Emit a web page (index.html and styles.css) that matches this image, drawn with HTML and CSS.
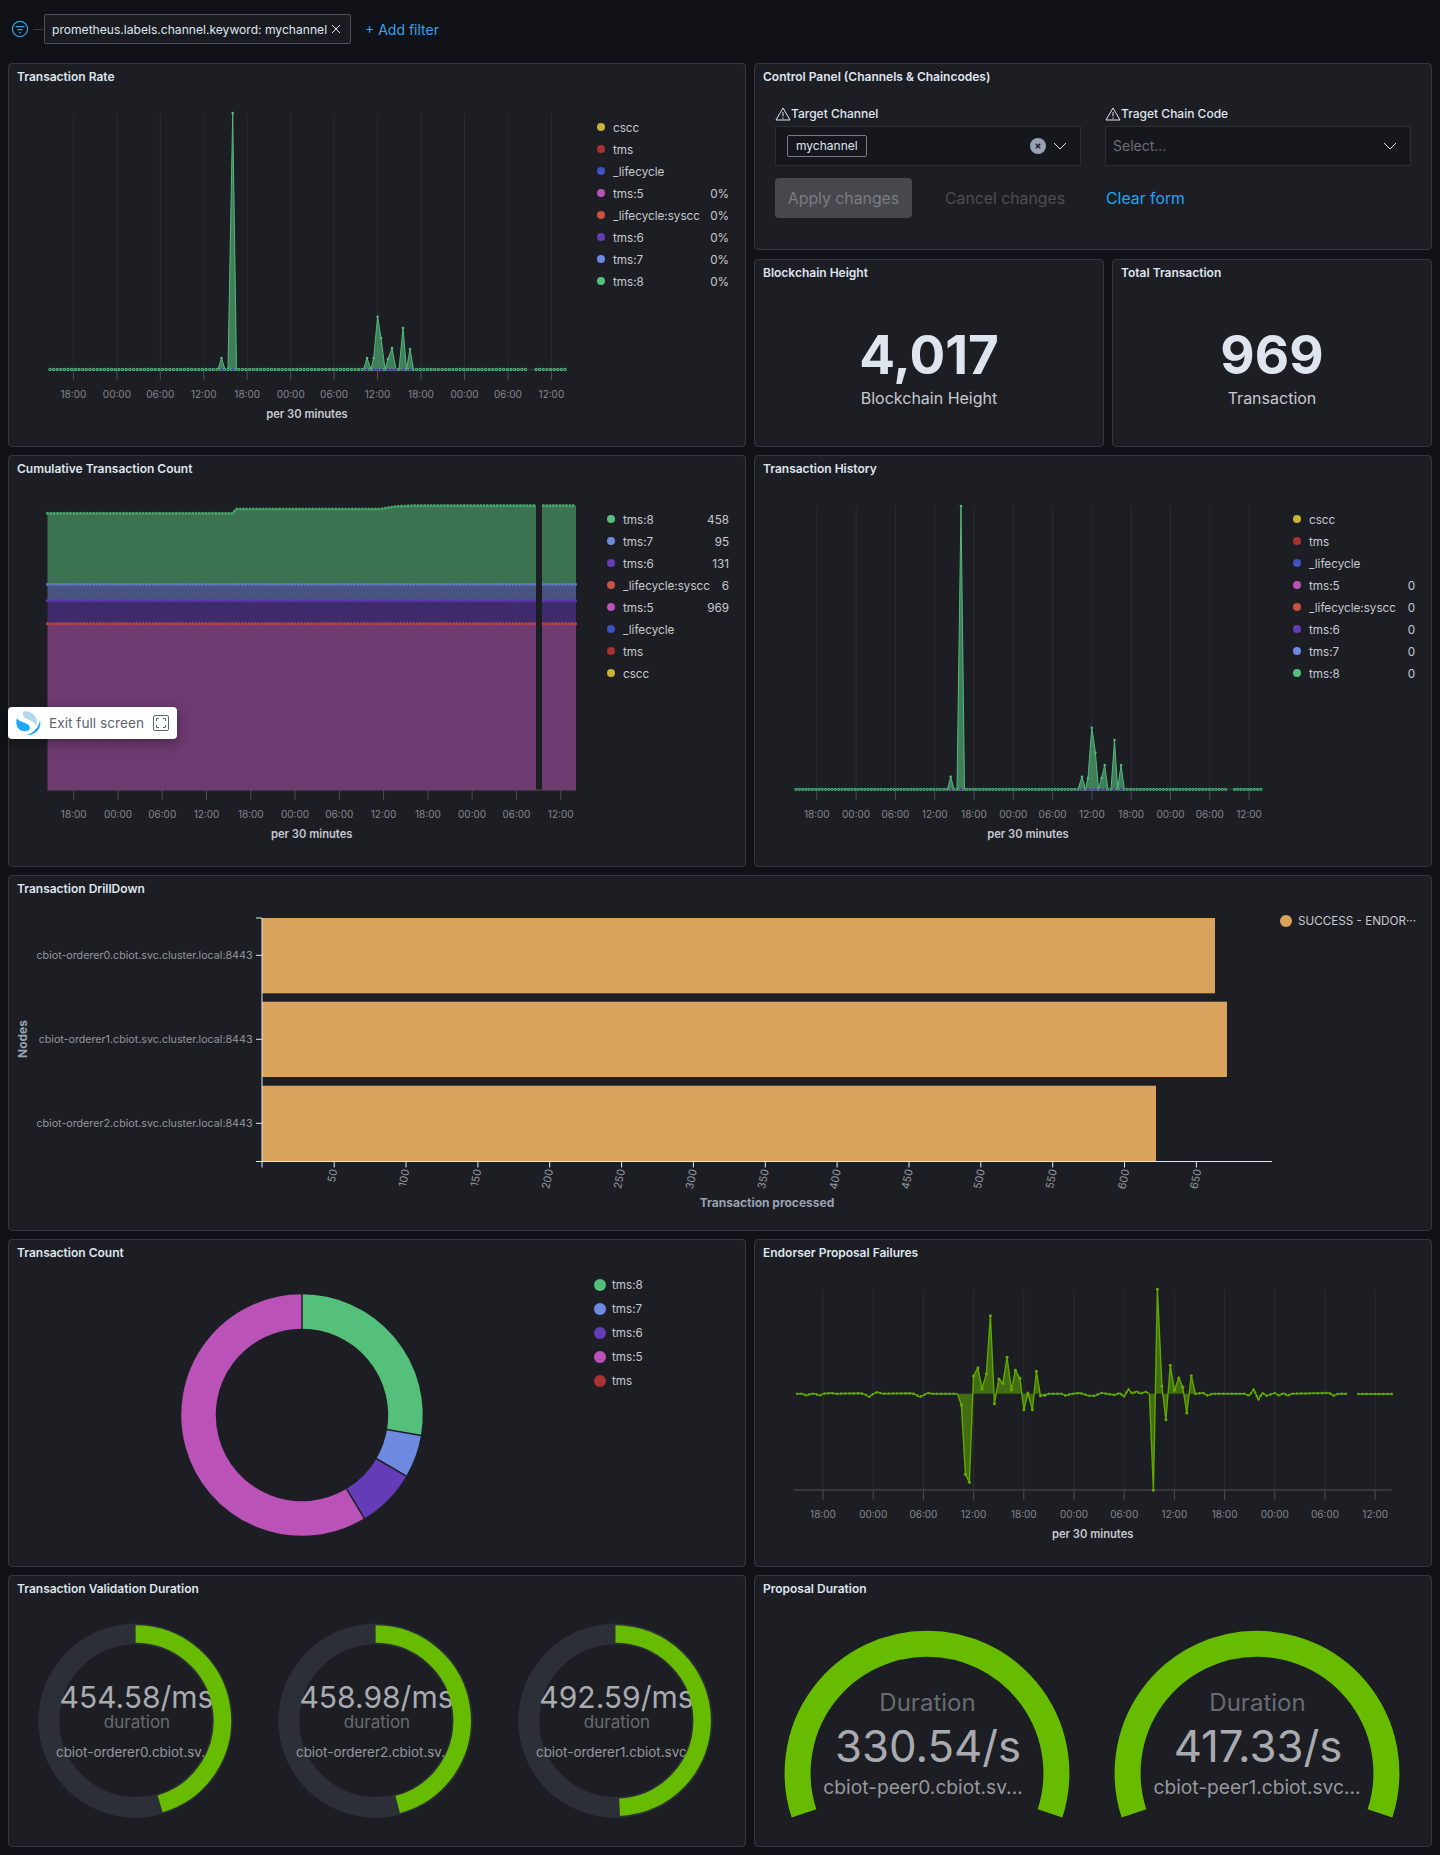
FILE: index.html
```html
<!DOCTYPE html>
<html lang="en">
<head>
<meta charset="utf-8">
<title>Dashboard</title>
<link rel="stylesheet" href="styles.css">
</head>
<body>
<header class="filter-bar">
  <svg class="filter-icon" width="18" height="18" viewBox="0 0 18 18"><circle cx="9" cy="9" r="7.6"/><path d="M4.6 6.6h8.8M6.4 9.6h5.2M8.2 12.6h1.600"/></svg>
  <span class="filter-dash"></span>
  <div class="filter-pill"><span>prometheus.labels.channel.keyword: mychannel</span><svg width="10" height="10" viewBox="0 0 10 10"><path d="M1 1l8 8M9 1l-8 8"/></svg></div>
  <a class="add-filter">+ Add filter</a>
</header>

<main class="dashboard">
  <section class="row row-1">
    <article class="panel">
      <h2>Transaction Rate</h2>
      <div class="chart-body">
        <svg width="585" height="355" viewBox="9 91 585 355">
          <defs>
            <marker id="mg" markerUnits="userSpaceOnUse" markerWidth="5" markerHeight="5" refX="2.5" refY="2.5" viewBox="0 0 5 5"><circle cx="2.5" cy="2.5" r="1.3" fill="#54b97b"/></marker>
            <marker id="ml" markerUnits="userSpaceOnUse" markerWidth="5" markerHeight="5" refX="2.5" refY="2.5" viewBox="0 0 5 5"><circle cx="2.5" cy="2.5" r="1.5" fill="#69ad00"/></marker>
          </defs>
          <path class="grid" d="M73.4 113V370M116.9 113V370M160.3 113V370M203.8 113V370M247.2 113V370M290.7 113V370M334.1 113V370M377.6 113V370M421 113V370M464.5 113V370M507.9 113V370M551.4 113V370"/>
          <path class="tick" d="M73.4 370V380M116.9 370V380M160.3 370V380M203.8 370V380M247.2 370V380M290.7 370V380M334.1 370V380M377.6 370V380M421 370V380M464.5 370V380M507.9 370V380M551.4 370V380"/>
          <polygon class="area-g" points="218,369.5 221.5,358 225,369.5"/>
          <polygon class="area-g" points="228,369.5 232.7,113 236.5,369.5"/>
          <polygon class="area-g" points="363.5,369.5 367,358 371,369.5 373.7,358 377.6,316.7 381,338 385,369.5 388,359 392,348 396,369.5"/>
          <polygon class="area-g" points="399,369.5 403,328 406.5,369.5 410,349 413.5,369.5"/>
          <polyline class="line-g" marker-mid="url(#mg)" points="218,369.5 221.5,358 225,369.5"/>
          <polyline class="line-g" marker-mid="url(#mg)" points="228,369.5 232.7,113 236.5,369.5"/>
          <polyline class="line-g" marker-mid="url(#mg)" points="363.5,369.5 367,358 371,369.5 373.7,358 377.6,316.7 381,338 385,369.5 388,359 392,348 396,369.5"/>
          <polyline class="line-g" marker-mid="url(#mg)" points="399,369.5 403,328 406.5,369.5 410,349 413.5,369.5"/>
          <path class="base-line" d="M50 369.5H567"/>
          <path class="dots-g" d="M50 369.5H528M536 369.5H567"/>
          <path class="dots-p" d="M222 369.5h1M233 369.5h1M367 369.5h1M374 369.5h8M388 369.5h8M403 369.5h1M410 369.5h1"/>
          <path class="dots-c" d="M50 369.5H528M536 369.5H567"/>
          <g class="tick-labels">
            <text x="73.4" y="397.6">18:00</text><text x="116.9" y="397.6">00:00</text><text x="160.3" y="397.6">06:00</text><text x="203.8" y="397.6">12:00</text><text x="247.2" y="397.6">18:00</text><text x="290.7" y="397.6">00:00</text><text x="334.1" y="397.6">06:00</text><text x="377.6" y="397.6">12:00</text><text x="421" y="397.6">18:00</text><text x="464.5" y="397.6">00:00</text><text x="507.9" y="397.6">06:00</text><text x="551.4" y="397.6">12:00</text>
          </g>
          <text class="axis-title" x="307" y="418">per 30 minutes</text>
        </svg>
        <ul class="legend legend-a">
          <li><i class="c-cscc"></i><span>cscc</span></li>
          <li><i class="c-tms"></i><span>tms</span></li>
          <li><i class="c-life"></i><span>_lifecycle</span></li>
          <li><i class="c-t5"></i><span>tms:5</span><b>0%</b></li>
          <li><i class="c-sys"></i><span>_lifecycle:syscc</span><b>0%</b></li>
          <li><i class="c-t6"></i><span>tms:6</span><b>0%</b></li>
          <li><i class="c-t7"></i><span>tms:7</span><b>0%</b></li>
          <li><i class="c-t8"></i><span>tms:8</span><b>0%</b></li>
        </ul>
      </div>
    </article>

    <div class="side">
      <article class="panel panel-control">
        <h2>Control Panel (Channels &amp; Chaincodes)</h2>
        <div class="control-body">
          <div class="fields">
            <div class="field">
              <label><svg width="16" height="14" viewBox="0 0 16 14"><path d="M8 1L1 13h14zM8 5v4.4M8 10.6v1.2"/></svg>Target Channel</label>
              <div class="select">
                <span class="chip">mychannel</span>
                <svg class="clear" width="16" height="16" viewBox="0 0 16 16"><circle cx="8" cy="8" r="8"/><path d="M5.8 5.8l4.4 4.4M10.2 5.8l-4.4 4.4"/></svg>
                <svg class="chev" width="14" height="8" viewBox="0 0 14 8"><path d="M1 1l6 6 6-6"/></svg>
              </div>
            </div>
            <div class="field">
              <label><svg width="16" height="14" viewBox="0 0 16 14"><path d="M8 1L1 13h14zM8 5v4.4M8 10.6v1.2"/></svg>Traget Chain Code</label>
              <div class="select">
                <span class="placeholder">Select...</span>
                <svg class="chev" width="14" height="8" viewBox="0 0 14 8"><path d="M1 1l6 6 6-6"/></svg>
              </div>
            </div>
          </div>
          <div class="actions">
            <button class="btn-apply">Apply changes</button>
            <span class="btn-cancel">Cancel changes</span>
            <a class="btn-clear">Clear form</a>
          </div>
        </div>
      </article>
      <div class="stats">
        <article class="panel panel-stat">
          <h2>Blockchain Height</h2>
          <div class="stat-body"><strong>4,017</strong><span>Blockchain Height</span></div>
        </article>
        <article class="panel panel-stat">
          <h2>Total Transaction</h2>
          <div class="stat-body"><strong>969</strong><span>Transaction</span></div>
        </article>
      </div>
    </div>
  </section>

  <section class="row row-2">
    <article class="panel">
      <h2>Cumulative Transaction Count</h2>
      <div class="chart-body">
        <svg width="597" height="383" viewBox="9 483 597 383">
          <rect class="fill-m" x="47.5" y="623.7" width="528.5" height="166.3"/>
          <rect class="fill-pu" x="47.5" y="600.7" width="528.5" height="23"/>
          <rect class="fill-b" x="47.5" y="584.3" width="528.5" height="16.4"/>
          <polygon class="fill-gr" points="47.5,584.3 47.5,513.3 232.7,513.3 236,509 380.5,509 395,506.5 412,505.7 576,505.7 576,584.3"/>
          <path class="grid-soft" d="M73.7 505V790M118 505V790M162.2 505V790M206.5 505V790M250.8 505V790M295 505V790M339.3 505V790M383.6 505V790M427.9 505V790M472.1 505V790M516.4 505V790M560.7 505V790"/>
          <polyline class="stack-line gr" points="47.5,513.3 232.7,513.3 236,509 380.5,509 395,506.5 412,505.7 576,505.7"/>
          <path class="stack-line bl" d="M47.5 584.3H576"/>
          <path class="stack-line pu" d="M47.5 600.7H576"/>
          <path class="stack-line re" d="M47.5 623.7H576"/>
          <rect class="gap" x="536" y="500" width="6" height="290"/>
          <path class="axis-line" d="M47.5 790H576"/>
          <path class="tick" d="M73.7 790V800M118 790V800M162.2 790V800M206.5 790V800M250.8 790V800M295 790V800M339.3 790V800M383.6 790V800M427.9 790V800M472.1 790V800M516.4 790V800M560.7 790V800"/>
          <g class="tick-labels">
            <text x="73.7" y="817.6">18:00</text><text x="118" y="817.6">00:00</text><text x="162.2" y="817.6">06:00</text><text x="206.5" y="817.6">12:00</text><text x="250.8" y="817.6">18:00</text><text x="295" y="817.6">00:00</text><text x="339.3" y="817.6">06:00</text><text x="383.6" y="817.6">12:00</text><text x="427.9" y="817.6">18:00</text><text x="472.1" y="817.6">00:00</text><text x="516.4" y="817.6">06:00</text><text x="560.7" y="817.6">12:00</text>
          </g>
          <text class="axis-title" x="311.7" y="837.7">per 30 minutes</text>
        </svg>
        <ul class="legend legend-b">
          <li><i class="c-t8"></i><span>tms:8</span><b>458</b></li>
          <li><i class="c-t7"></i><span>tms:7</span><b>95</b></li>
          <li><i class="c-t6"></i><span>tms:6</span><b>131</b></li>
          <li><i class="c-sys"></i><span>_lifecycle:syscc</span><b>6</b></li>
          <li><i class="c-t5"></i><span>tms:5</span><b>969</b></li>
          <li><i class="c-life"></i><span>_lifecycle</span></li>
          <li><i class="c-tms"></i><span>tms</span></li>
          <li><i class="c-cscc"></i><span>cscc</span></li>
        </ul>
      </div>
    </article>

    <article class="panel">
      <h2>Transaction History</h2>
      <div class="chart-body">
        <svg width="537" height="383" viewBox="755 483 537 383">
          <path class="grid" d="M816.8 506V790M856.1 506V790M895.4 506V790M934.7 506V790M974 506V790M1013.3 506V790M1052.6 506V790M1091.9 506V790M1131.2 506V790M1170.5 506V790M1209.8 506V790M1249.1 506V790"/>
          <path class="tick" d="M816.8 790V800M856.1 790V800M895.4 790V800M934.7 790V800M974 790V800M1013.3 790V800M1052.6 790V800M1091.9 790V800M1131.2 790V800M1170.5 790V800M1209.8 790V800M1249.1 790V800"/>
          <polygon class="area-g" points="947.5,789.3 950.7,776.7 954,789.3"/>
          <polygon class="area-g" points="957,789.3 961,506 964.5,789.3"/>
          <polygon class="area-g" points="1078,789.3 1082,776.7 1085.5,789.3 1088,778 1091.8,727.7 1095.4,752.7 1098.5,789.3 1101.6,778 1104.7,765 1107.9,789.3"/>
          <polygon class="area-g" points="1111,789.3 1114.5,740 1117.7,789.3 1121,765 1124.4,789.3"/>
          <polyline class="line-g" marker-mid="url(#mg)" points="947.5,789.3 950.7,776.7 954,789.3"/>
          <polyline class="line-g" marker-mid="url(#mg)" points="957,789.3 961,506 964.5,789.3"/>
          <polyline class="line-g" marker-mid="url(#mg)" points="1078,789.3 1082,776.7 1085.5,789.3 1088,778 1091.8,727.7 1095.4,752.7 1098.5,789.3 1101.6,778 1104.7,765 1107.9,789.3"/>
          <polyline class="line-g" marker-mid="url(#mg)" points="1111,789.3 1114.5,740 1117.7,789.3 1121,765 1124.4,789.3"/>
          <path class="base-line" d="M796 789.3H1263"/>
          <path class="dots-g2" d="M796 789.3H1226.6M1234.6 789.3H1263"/>
          <path class="dots-p" d="M951 789.3h1M961 789.3h1M1082 789.3h1M1088 789.3h8M1101 789.3h6M1114 789.3h1M1121 789.3h1"/>
          <path class="dots-c2" d="M796 789.3H1226.6M1234.6 789.3H1263"/>
          <g class="tick-labels">
            <text x="816.8" y="817.6">18:00</text><text x="856.1" y="817.6">00:00</text><text x="895.4" y="817.6">06:00</text><text x="934.7" y="817.6">12:00</text><text x="974" y="817.6">18:00</text><text x="1013.3" y="817.6">00:00</text><text x="1052.6" y="817.6">06:00</text><text x="1091.9" y="817.6">12:00</text><text x="1131.2" y="817.6">18:00</text><text x="1170.5" y="817.6">00:00</text><text x="1209.8" y="817.6">06:00</text><text x="1249.1" y="817.6">12:00</text>
          </g>
          <text class="axis-title" x="1028" y="837.7">per 30 minutes</text>
        </svg>
        <ul class="legend legend-c">
          <li><i class="c-cscc"></i><span>cscc</span></li>
          <li><i class="c-tms"></i><span>tms</span></li>
          <li><i class="c-life"></i><span>_lifecycle</span></li>
          <li><i class="c-t5"></i><span>tms:5</span><b>0</b></li>
          <li><i class="c-sys"></i><span>_lifecycle:syscc</span><b>0</b></li>
          <li><i class="c-t6"></i><span>tms:6</span><b>0</b></li>
          <li><i class="c-t7"></i><span>tms:7</span><b>0</b></li>
          <li><i class="c-t8"></i><span>tms:8</span><b>0</b></li>
        </ul>
      </div>
    </article>
  </section>

  <section class="row row-3">
    <article class="panel">
      <h2>Transaction DrillDown</h2>
      <div class="chart-body">
        <svg width="1271" height="327" viewBox="9 903 1271 327">
          <rect class="bar" x="262" y="918" width="953" height="75.3"/>
          <rect class="bar" x="262" y="1001.7" width="965" height="75.3"/>
          <rect class="bar" x="262" y="1085.7" width="894" height="75.3"/>
          <path class="bar-axis" d="M262 918V1161.5H1272M256 918h6M256 955.3h6M256 1039.3h6M256 1123.3h6M256 1161.5h6M262 1161.5v6M334.2 1161.5v6M406 1161.5v6M477.9 1161.5v6M549.7 1161.5v6M621.6 1161.5v6M693.4 1161.5v6M765.3 1161.5v6M837.1 1161.5v6M909 1161.5v6M980.8 1161.5v6M1052.7 1161.5v6M1124.5 1161.5v6M1196.4 1161.5v6"/>
          <g class="node-labels">
            <text x="252.5" y="959">cbiot-orderer0.cbiot.svc.cluster.local:8443</text>
            <text x="252.5" y="1043">cbiot-orderer1.cbiot.svc.cluster.local:8443</text>
            <text x="252.5" y="1127">cbiot-orderer2.cbiot.svc.cluster.local:8443</text>
          </g>
          <g class="rot-labels">
            <text transform="translate(337.5 1170) rotate(-78)">50</text>
            <text transform="translate(409.5 1170) rotate(-78)">100</text>
            <text transform="translate(481.4 1170) rotate(-78)">150</text>
            <text transform="translate(553.2 1170) rotate(-78)">200</text>
            <text transform="translate(625.1 1170) rotate(-78)">250</text>
            <text transform="translate(697 1170) rotate(-78)">300</text>
            <text transform="translate(769 1170) rotate(-78)">350</text>
            <text transform="translate(841 1170) rotate(-78)">400</text>
            <text transform="translate(913 1170) rotate(-78)">450</text>
            <text transform="translate(985 1170) rotate(-78)">500</text>
            <text transform="translate(1057 1170) rotate(-78)">550</text>
            <text transform="translate(1129.5 1170) rotate(-78)">600</text>
            <text transform="translate(1201.5 1170) rotate(-78)">650</text>
          </g>
          <text class="bar-title" transform="translate(27 1039) rotate(-90)">Nodes</text>
          <text class="bar-title" x="767" y="1207">Transaction processed</text>
        </svg>
        <ul class="legend legend-d">
          <li><i class="c-orange"></i><span>SUCCESS - ENDOR···</span></li>
        </ul>
      </div>
    </article>
  </section>

  <section class="row row-4">
    <article class="panel">
      <h2>Transaction Count</h2>
      <div class="chart-body">
        <svg width="585" height="299" viewBox="9 1267 585 299">
          <g class="donut">
            <path class="s-t8" d="M302 1311.5A103.5 103.5 0 0 1 404 1432.4"/>
            <path class="s-t7" d="M404 1432.4A103.5 103.5 0 0 1 391.3 1467.4"/>
            <path class="s-t6" d="M391.3 1467.4A103.5 103.5 0 0 1 355.5 1503.6"/>
            <path class="s-t5" d="M355.5 1503.6A103.5 103.5 0 1 1 302 1311.5"/>
          </g>
          <path class="donut-sep" d="M302 1293V1329M386.8 1429.5L421.3 1435.4M376.2 1458.5L406.4 1476.2M346.4 1488.6L364.5 1518.6"/>
        </svg>
        <ul class="legend legend-e">
          <li><i class="c-t8"></i><span>tms:8</span></li>
          <li><i class="c-t7"></i><span>tms:7</span></li>
          <li><i class="c-t6"></i><span>tms:6</span></li>
          <li><i class="c-t5"></i><span>tms:5</span></li>
          <li><i class="c-tms"></i><span>tms</span></li>
        </ul>
      </div>
    </article>

    <article class="panel">
      <h2>Endorser Proposal Failures</h2>
      <div class="chart-body">
        <svg width="676" height="299" viewBox="755 1267 676 299">
          <path class="grid" d="M823 1290V1490M873.2 1290V1490M923.4 1290V1490M973.6 1290V1490M1023.8 1290V1490M1074 1290V1490M1124.2 1290V1490M1174.4 1290V1490M1224.6 1290V1490M1274.8 1290V1490M1325 1290V1490M1375.2 1290V1490"/>
          <path class="axis-thick" d="M794 1490H1391.8"/>
          <path class="tick" d="M823 1490V1500M873.2 1490V1500M923.4 1490V1500M973.6 1490V1500M1023.8 1490V1500M1074 1490V1500M1124.2 1490V1500M1174.4 1490V1500M1224.6 1490V1500M1274.8 1490V1500M1325 1490V1500M1375.2 1490V1500"/>
          <polygon class="area-l" points="957.4,1393.7 961.4,1405 965.4,1474.3 969.4,1482.3 973.5,1376 977.9,1368 982,1389 986.4,1373.7 990.4,1315.7 994.4,1403.7 998.9,1379 1002.9,1383.3 1007,1357.3 1011.4,1390 1015.4,1370.3 1019.9,1378.3 1023.9,1409.7 1027.9,1393.3 1032.4,1409.7 1036.4,1371.3 1040.4,1395.7 1044.9,1395.3 1048.9,1393.7"/>
          <polygon class="area-l" points="1149.4,1393.7 1153.4,1490.3 1157.4,1289.3 1161.9,1386 1165.9,1419.7 1170.3,1365.3 1174.4,1390.3 1178.8,1378 1182.8,1387.3 1186.8,1413 1191.3,1375.7 1195.3,1393.7"/>
          <polyline class="line-l" marker-mid="url(#ml)" points="957.4,1393.7 961.4,1405 965.4,1474.3 969.4,1482.3 973.5,1376 977.9,1368 982,1389 986.4,1373.7 990.4,1315.7 994.4,1403.7 998.9,1379 1002.9,1383.3 1007,1357.3 1011.4,1390 1015.4,1370.3 1019.9,1378.3 1023.9,1409.7 1027.9,1393.3 1032.4,1409.7 1036.4,1371.3 1040.4,1395.7 1044.9,1395.3 1048.9,1393.7"/>
          <polyline class="line-l" marker-mid="url(#ml)" points="1149.4,1393.7 1153.4,1490.3 1157.4,1289.3 1161.9,1386 1165.9,1419.7 1170.3,1365.3 1174.4,1390.3 1178.8,1378 1182.8,1387.3 1186.8,1413 1191.3,1375.7 1195.3,1393.7"/>
          <polyline class="line-l" points="797.1,1393.7 802.5,1393.7 806.5,1395.7 810.5,1393.7 815,1393.7 819,1395.7 823.5,1393.7 831.5,1393 836,1393.7 860.5,1393.3 865,1394.3 869,1397 873.5,1393.7 877.5,1392 882,1393.7 911.9,1393.3 915.9,1394.7 919.9,1397 923.9,1395 927.9,1393 932,1393.7 957.4,1393.7"/>
          <polyline class="line-l" points="1048.9,1393.7 1061.4,1393.7 1065.9,1395.7 1070.3,1394 1079.3,1393 1083.7,1394 1088.2,1395.7 1094.9,1395.7 1101.6,1393 1115,1395 1119.9,1393 1123.9,1396.7 1128.4,1389.3 1132.4,1393.7 1136.4,1391.3 1140.9,1393.7 1145.3,1391.7 1149.4,1393.7"/>
          <polyline class="line-l" points="1195.3,1393.7 1203.4,1393 1207.8,1395.7 1212.3,1393.7 1244.4,1393.7 1249.3,1395.7 1253.8,1389.3 1258.3,1399.7 1262.3,1393 1266.8,1395.7 1274.8,1393 1279.3,1395.7 1283.3,1393 1287.7,1395.7 1291.7,1393.7 1329.3,1393 1333.7,1395.7 1338.2,1393.7 1347.1,1393.7"/>
          <path class="line-l" d="M1358.3 1394H1393"/>
          <g class="dots-l">
            <polyline points="797.1,1393.7 802.5,1393.7 806.5,1395.7 810.5,1393.7 815,1393.7 819,1395.7 823.5,1393.7 831.5,1393 836,1393.7 860.5,1393.3 865,1394.3 869,1397 873.5,1393.7 877.5,1392 882,1393.7 911.9,1393.3 915.9,1394.7 919.9,1397 923.9,1395 927.9,1393 932,1393.7 957.4,1393.7"/>
            <polyline points="1048.9,1393.7 1061.4,1393.7 1065.9,1395.7 1070.3,1394 1079.3,1393 1083.7,1394 1088.2,1395.7 1094.9,1395.7 1101.6,1393 1115,1395 1119.9,1393 1123.9,1396.7 1128.4,1389.3 1132.4,1393.7 1136.4,1391.3 1140.9,1393.7 1145.3,1391.7 1149.4,1393.7"/>
            <polyline points="1195.3,1393.7 1203.4,1393 1207.8,1395.7 1212.3,1393.7 1244.4,1393.7 1249.3,1395.7 1253.8,1389.3 1258.3,1399.7 1262.3,1393 1266.8,1395.7 1274.8,1393 1279.3,1395.7 1283.3,1393 1287.7,1395.7 1291.7,1393.7 1329.3,1393 1333.7,1395.7 1338.2,1393.7 1347.1,1393.7"/>
            <path d="M1358.3 1394H1393"/>
          </g>
          <g class="tick-labels">
            <text x="823" y="1517.6">18:00</text><text x="873.2" y="1517.6">00:00</text><text x="923.4" y="1517.6">06:00</text><text x="973.6" y="1517.6">12:00</text><text x="1023.8" y="1517.6">18:00</text><text x="1074" y="1517.6">00:00</text><text x="1124.2" y="1517.6">06:00</text><text x="1174.4" y="1517.6">12:00</text><text x="1224.6" y="1517.6">18:00</text><text x="1274.8" y="1517.6">00:00</text><text x="1325" y="1517.6">06:00</text><text x="1375.2" y="1517.6">12:00</text>
          </g>
          <text class="axis-title" x="1092.7" y="1537.7">per 30 minutes</text>
        </svg>
      </div>
    </article>
  </section>

  <section class="row row-5">
    <article class="panel">
      <h2>Transaction Validation Duration</h2>
      <div class="chart-body">
        <svg width="735" height="243" viewBox="9 1603 735 243">
          <circle class="ring-bg" cx="135.6" cy="1720.7" r="86.7"/>
          <circle class="ring-bg" cx="375.6" cy="1720.7" r="86.7"/>
          <circle class="ring-bg" cx="615.5" cy="1720.7" r="86.7"/>
          <g class="g-value">
            <text x="136.5" y="1707.5">454.58/ms</text>
            <text x="376.5" y="1707.5">458.98/ms</text>
            <text x="616.5" y="1707.5">492.59/ms</text>
          </g>
          <g class="g-sub">
            <text x="137" y="1728">duration</text>
            <text x="377" y="1728">duration</text>
            <text x="617" y="1728">duration</text>
          </g>
          <g class="g-label">
            <text x="56" y="1757">cbiot-orderer0.cbiot.sv...</text>
            <text x="296" y="1757">cbiot-orderer2.cbiot.sv...</text>
            <text x="536" y="1757">cbiot-orderer1.cbiot.svc...</text>
          </g>
          <path class="ring-on" d="M135.6 1634A86.7 86.7 0 0 1 160.1 1803.9"/>
          <path class="ring-on" d="M375.6 1634A86.7 86.7 0 0 1 397.7 1804.5"/>
          <path class="ring-on" d="M615.5 1634A86.7 86.7 0 0 1 619.6 1807.3"/>
        </svg>
      </div>
    </article>

    <article class="panel">
      <h2>Proposal Duration</h2>
      <div class="chart-body">
        <svg width="676" height="243" viewBox="755 1603 676 243">
          <path class="arc" d="M804 1813.4A129.4 129.4 0 1 1 1050 1813.4"/>
          <path class="arc" d="M1134 1813.4A129.4 129.4 0 1 1 1380 1813.4"/>
          <text class="p-sub" x="927.5" y="1710.7">Duration</text>
          <text class="p-sub" x="1257.5" y="1710.7">Duration</text>
          <text class="p-value" x="928" y="1762.3">330.54/s</text>
          <text class="p-value" x="1258" y="1762.3">417.33/s</text>
          <text class="p-label" x="923" y="1794">cbiot-peer0.cbiot.sv...</text>
          <text class="p-label" x="1257" y="1794">cbiot-peer1.cbiot.svc...</text>
        </svg>
      </div>
    </article>
  </section>
</main>

<aside class="exit-fs">
  <svg class="exit-logo" width="25" height="24" viewBox="0 0 75 72">
    <path class="l1" d="M22 1C38-2 58 8 61 24C63 34 62 42 60 48C58 36 50 30 38 26C28 23 17 17 22 1Z"/>
    <path class="l2" d="M3 22C8 32 22 33 32 38C42 43 44 52 38 58C28 64 10 60 4 48C0 40 0 30 3 22Z"/>
    <path class="l2" d="M72 28C78 52 58 74 30 72C50 68 68 52 72 28Z"/>
  </svg>
  <span>Exit full screen</span>
  <svg class="exit-icon" width="16" height="16" viewBox="0 0 16 16"><rect x=".5" y=".5" width="15" height="15" rx="1.5"/><path d="M3.5 6V3.5H6M10 3.5h2.5V6M12.500 10v2.500H10M6 12.500H3.500V10"/></svg>
</aside>
</body>
</html>
```

FILE: styles.css
```css
* { box-sizing: border-box; }
html, body { margin: 0; padding: 0; }
body {
  position: relative;
  width: 1440px;
  height: 1855px;
  overflow: hidden;
  background: #111217;
  font-family: Inter, "Noto Sans", sans-serif;
  color: #dfe5ef;
}

/* Filter bar */
.filter-bar {
  height: 63px;
  display: flex;
  align-items: center;
  padding: 0 0 5px 11px;
}
.filter-icon { fill: none; stroke: #36a2ef; stroke-width: 1.2; }
.filter-dash { width: 10px; height: 1px; background: #3a3d46; margin: 0 1px 0 4px; }
.filter-pill {
  width: 307px;
  height: 30px;
  display: flex;
  align-items: center;
  justify-content: space-between;
  padding: 0 9px 0 7px;
  background: #1a1b20;
  border: 1px solid #4d515b;
  border-radius: 2px;
  font-size: 12.1px;
  color: #dfe5ef;
  white-space: nowrap;
}
.filter-pill svg { fill: none; stroke: #dfe5ef; stroke-width: 1; flex: none; }
.add-filter { margin-left: 14px; font-size: 14px; color: #36a2ef; }

/* Grid */
.dashboard { display: flex; flex-direction: column; gap: 8px; padding: 0 8px 8px; }
.row { display: grid; grid-template-columns: 738px 678px; column-gap: 8px; }
.row-1 { height: 384px; }
.row-2 { height: 412px; }
.row-3 { height: 356px; grid-template-columns: 1424px; }
.row-4 { height: 328px; }
.row-5 { height: 272px; }

.panel {
  background: #1d1e24;
  border: 1px solid #343741;
  border-radius: 4px;
  overflow: hidden;
  display: flex;
  flex-direction: column;
  min-width: 0;
}
.panel h2 {
  margin: 0;
  height: 27px;
  flex: none;
  padding: 5px 0 0 8px;
  font-size: 12px;
  line-height: 16px;
  font-weight: 600;
  color: #dfe5ef;
}
.chart-body { display: flex; flex: 1; min-height: 0; }
.chart-body svg { flex: none; display: block; }

/* Legends */
.legend {
  list-style: none;
  margin: 0;
  flex: 1;
  min-width: 0;
  font-size: 11.7px;
  color: #c6c9cf;
}
.legend li { display: flex; align-items: center; height: 22px; white-space: nowrap; }
.legend i { flex: none; width: 8px; height: 8px; border-radius: 50%; margin-right: 8px; margin-top: -2px; }
.legend span { flex: 1; }
.legend b { font-weight: 400; }
.legend-a { padding: 26px 16px 0 3px; }
.legend-b { padding: 26px 16px 0 1px; }
.legend-c { padding: 26px 16px 0 1px; }
.legend-d { padding: 6px 14px 0 0; }
.legend-d li { height: 24px; }
.legend-d i, .legend-e i { width: 12px; height: 12px; margin-right: 6px; margin-top: 0; }
.legend-e { padding: 6px 0 0 0; }
.legend-e li { height: 24px; }

.c-cscc { background: #c9b438; }
.c-tms { background: #a83232; }
.c-life { background: #3e52c4; }
.c-t5 { background: #bb52b8; }
.c-sys { background: #c95240; }
.c-t6 { background: #643cb8; }
.c-t7 { background: #6e8ae0; }
.c-t8 { background: #54c07c; }
.c-orange { background: #d9a35e; }

/* Chart marks */
svg text { font-family: Inter, "Noto Sans", sans-serif; }
.grid { stroke: #2a2c33; stroke-width: 1; fill: none; }
.grid-soft { stroke: #ffffff; stroke-opacity: .018; stroke-width: 1; fill: none; }
.tick { stroke: #4a4c53; stroke-width: 1; fill: none; }
.axis-line { stroke: #5d4c60; stroke-width: 1; }
.axis-thick { stroke: #36373c; stroke-width: 2; }
.tick-labels text { font-size: 10px; fill: #85878d; text-anchor: middle; }
.axis-title { font-size: 11.2px; font-weight: 600; fill: #c6c9cf; text-anchor: middle; }
.area-g { fill: #54b97b; fill-opacity: .62; }
.line-g { fill: none; stroke: #54b97b; stroke-width: 1; }
.base-line { stroke: #3a3c43; stroke-width: 1; }
.dots-g { fill: none; stroke: #4fb07a; stroke-width: 3.4; stroke-linecap: round; stroke-dasharray: 0 3.63; }
.dots-c { fill: none; stroke: #1d1e24; stroke-width: 1; stroke-linecap: round; stroke-dasharray: 0 3.63; }
.dots-g2 { fill: none; stroke: #4fb07a; stroke-width: 3.2; stroke-linecap: round; stroke-dasharray: 0 3.28; }
.dots-c2 { fill: none; stroke: #1d1e24; stroke-width: 1; stroke-linecap: round; stroke-dasharray: 0 3.28; }
.dots-p { fill: none; stroke: #643cb8; stroke-width: 3; stroke-linecap: round; stroke-dasharray: 0 3.63; }

.fill-m { fill: #6e3a70; }
.fill-pu { fill: #3f2b6c; }
.fill-b { fill: #47547f; }
.fill-gr { fill: #3b7351; }
.stack-line { fill: none; stroke-width: 3.2; stroke-linecap: round; stroke-dasharray: 0 3.3; }
.stack-line.gr { stroke: #46a066; }
.stack-line.bl { stroke: #5f78c8; }
.stack-line.pu { stroke: #5c36ac; }
.stack-line.re { stroke: #bc3e48; }
.gap { fill: #1d1e24; }

.bar { fill: #d9a35e; }
.bar-axis { fill: none; stroke: #dfe5ef; stroke-width: 1; }
.node-labels text { font-size: 10.7px; fill: #92969e; text-anchor: end; }
.rot-labels text { font-size: 10.7px; fill: #92969e; text-anchor: end; }
.bar-title { font-size: 12px; font-weight: 700; fill: #98a2b3; text-anchor: middle; }

.donut path { fill: none; stroke-width: 34.5; }
.s-t8 { stroke: #54c07c; }
.s-t7 { stroke: #6e8ae0; }
.s-t6 { stroke: #643cb8; }
.s-t5 { stroke: #bb52b8; }
.donut-sep { stroke: #1d1e24; stroke-width: 1.5; fill: none; }

.area-l { fill: #68bc00; fill-opacity: .5; }
.line-l { fill: none; stroke: #5ea800; stroke-width: 1.4; }
.dots-l polyline, .dots-l path { fill: none; stroke: #5ea800; stroke-width: 2.6; stroke-linecap: round; stroke-dasharray: 0 4.18; }

.ring-bg { fill: none; stroke: #2c2f37; stroke-width: 21; }
.ring-on { fill: none; stroke: #68bc00; stroke-width: 17.5; }
.g-value text { font-size: 30px; fill: #a9abb0; text-anchor: middle; }
.g-sub text { font-size: 17px; fill: #696c72; text-anchor: middle; }
.g-label text { font-size: 13.4px; fill: #96989e; }
.arc { fill: none; stroke: #68bc00; stroke-width: 26; }
.p-sub { font-size: 24px; fill: #696c72; text-anchor: middle; }
.p-value { font-size: 43.7px; fill: #a9abb0; text-anchor: middle; }
.p-label { font-size: 19.2px; fill: #96989e; text-anchor: middle; }

/* Right column of the first row */
.side { display: flex; flex-direction: column; gap: 9px; min-height: 0; }
.panel-control { height: 187px; flex: none; }
.control-body { padding: 11px 21px 0 20px; }
.fields { display: grid; grid-template-columns: 306px 306px; column-gap: 24px; }
.field label {
  display: flex;
  align-items: center;
  gap: 0;
  height: 24px;
  padding: 0 0 1px 0;
  font-size: 12px;
  font-weight: 500;
  color: #dfe5ef;
}
.field label svg { fill: none; stroke: #dfe5ef; stroke-width: 1; margin-right: 0; }
.select {
  height: 40px;
  display: flex;
  align-items: center;
  padding: 0 13px 1px 11px;
  background: #16171c;
  border: 1px solid #2c2e35;
}
.chip {
  height: 22px;
  padding: 0 8px;
  line-height: 20px;
  font-size: 12px;
  border: 1px solid #777b85;
  border-radius: 2px;
  color: #dfe5ef;
}
.placeholder { margin-left: -4px; font-size: 14px; color: #6a6d75; }
.clear { margin-left: auto; margin-right: 7px; }
.clear circle { fill: #98a2b3; }
.clear path { stroke: #1d1e24; stroke-width: 1.5; fill: none; }
.chev { fill: none; stroke: #dfe5ef; stroke-width: 1; flex: none; }
.select .placeholder + .chev { margin-left: auto; }
.actions { display: flex; align-items: center; margin-top: 12px; font-size: 15.8px; }
.btn-apply {
  width: 137px;
  height: 40px;
  border: 0;
  padding: 0;
  border-radius: 4px;
  background: #47484d;
  color: #7a7c80;
  font: inherit;
}
.btn-cancel { margin-left: 33px; color: #4c4e53; }
.btn-clear { margin-left: 41px; color: #1ba9f5; }

.stats { flex: 1; display: grid; grid-template-columns: 350px 320px; column-gap: 8px; min-height: 0; }
.panel-stat { min-height: 0; }
.stat-body {
  flex: 1;
  display: flex;
  flex-direction: column;
  align-items: center;
  padding-top: 37px;
}
.stat-body strong { font-size: 53px; line-height: 62px; font-weight: 700; color: #dfe5ef; }
.stat-body span { margin-top: 1px; font-size: 16px; line-height: 22px; color: #c6c9cf; }

/* Floating exit button */
.exit-fs {
  position: absolute;
  left: 8px;
  top: 707px;
  width: 169px;
  height: 32px;
  display: flex;
  align-items: center;
  padding: 0 8px 1px 8px;
  background: #fff;
  border-radius: 4px;
  box-shadow: 0 4px 12px rgba(0, 0, 0, .35);
  color: #5f6672;
  font-size: 13.7px;
}
.exit-logo { flex: none; margin-right: 8px; }
.exit-logo .l1 { fill: #b4d7ea; }
.exit-logo .l2 { fill: #1ba9f5; }
.exit-icon { margin-left: auto; flex: none; fill: none; stroke: #5f6672; stroke-width: 1; }
```
